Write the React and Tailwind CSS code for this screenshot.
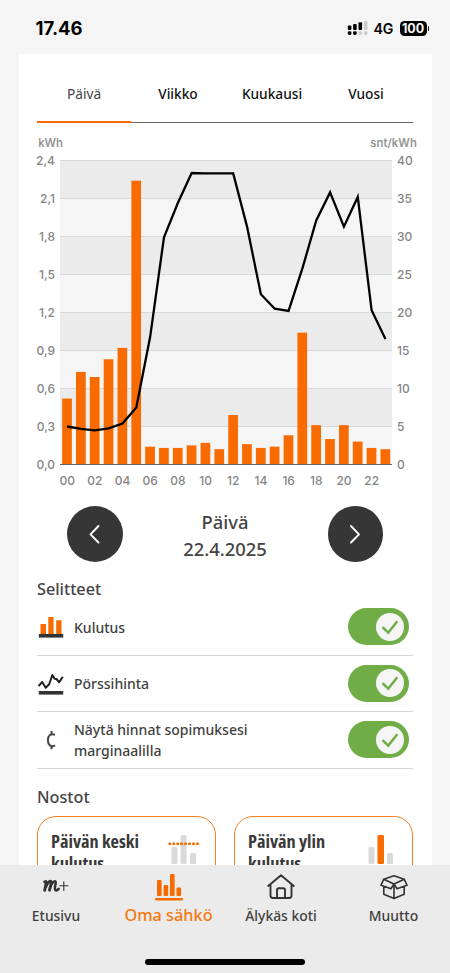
import React from "react";

const USAGE = [
  0.52, 0.73, 0.69, 0.83, 0.92, 2.24, 0.14, 0.13, 0.13, 0.15, 0.17, 0.12,
  0.39, 0.16, 0.13, 0.14, 0.23, 1.04, 0.31, 0.2, 0.31, 0.18, 0.13, 0.12,
];
const PRICE = [
  5, 4.7, 4.5, 4.75, 5.4, 7.5, 16.8, 29.9, 34.4, 38.35, 38.3, 38.3,
  38.3, 31.3, 22.4, 20.5, 20.2, 25.8, 32.1, 35.8, 31.3, 35.2, 20.3, 16.5,
];
const LEFT = ["2,4", "2,1", "1,8", "1,5", "1,2", "0,9", "0,6", "0,3", "0,0"];
const RIGHT = ["40", "35", "30", "25", "20", "15", "10", "5", "0"];

const TOP = 32;
const BOTTOM = 336;
const X0 = 41;
const STEP = 13.84;

function Chart() {
  const points = PRICE.map((p, i) => `${X0 + (i + 0.5) * STEP},${BOTTOM - p * 7.6}`).join(" ");
  return (
    <svg width="413" height="366" viewBox="0 0 413 366" className="block font-['Inter',sans-serif] text-[12px] font-medium" fill="#858585">
      <text x="19.3" y="18.5" textLength="24.5" className="text-[11.3px] font-semibold" fill="#949494">kWh</text>
      <text x="351.3" y="18.5" textLength="46.5" className="text-[11.3px] font-semibold" fill="#949494">snt/kWh</text>
      {LEFT.slice(1).map((_, i) => (
        <rect key={i} x={X0} y={TOP + i * 38} width="332" height="38" fill={i % 2 ? "#f5f5f5" : "#ebebeb"} />
      ))}
      {LEFT.slice(1).map((_, i) => (
        <rect key={i} x={X0} y={TOP + i * 38} width="332" height="1" fill="#d9d9d9" />
      ))}
      {USAGE.map((v, i) => {
        const h = (v / 2.4) * 304;
        return <rect key={i} x={X0 + (i + 0.5) * STEP - 4.75} y={BOTTOM + 0.4 - h} width="9.7" height={h} fill="#f76b00" />;
      })}
      <rect x={X0} y={BOTTOM} width="332" height="1" fill="#666" />
      <polyline points={points} transform="translate(0.2 0.5)" fill="none" stroke="#000" strokeWidth="2.3" strokeLinejoin="miter" />
      {LEFT.map((t, i) => (
        <text key={t} x="36" y={TOP + i * 38 + 4.7} textAnchor="end">{t}</text>
      ))}
      {RIGHT.map((t, i) => (
        <text key={t} x="378" y={TOP + i * 38 + 4.7}>{t}</text>
      ))}
      {USAGE.map((_, i) =>
        i % 2 ? null : (
          <text key={i} x={X0 + (i + 0.5) * STEP + 0.3} y="357" textAnchor="middle">
            {String(i).padStart(2, "0")}
          </text>
        )
      )}
    </svg>
  );
}

function Toggle() {
  return (
    <div className="mr-1 flex h-[37px] w-[61px] shrink-0 items-center justify-end rounded-full bg-[#70ad47] pr-[5px]">
      <div className="flex size-7 items-center justify-center rounded-full bg-[#f5f5f5]">
        <svg width="20" height="20" viewBox="0 0 20 20" fill="none" stroke="#70ad47" strokeWidth="2.5">
          <path d="M2.5 10.2 8.2 15.7 17.3 4.2" />
        </svg>
      </div>
    </div>
  );
}

function LegendRow({ icon, children }) {
  return (
    <div className="flex h-[56.5px] items-center border-b border-[#d5d5d5]">
      <div className="flex w-[37px] shrink-0 pt-0.5">{icon}</div>
      <div className="flex-1 pt-[3px] text-[14px] leading-[20.8px] font-medium whitespace-nowrap text-[#3f3f3f]">{children}</div>
      <Toggle />
    </div>
  );
}

function RoundButton({ d }) {
  return (
    <button className="flex size-[55.5px] items-center justify-center rounded-full bg-[#363636]">
      <svg width="20" height="24" viewBox="0 0 20 24" fill="none" stroke="#fff" strokeWidth="1.9" strokeLinecap="round" strokeLinejoin="round">
        <path d={d} />
      </svg>
    </button>
  );
}

function Highlight({ first, children }) {
  return (
    <div className="flex h-[150px] w-[179px] items-start justify-between rounded-[19px] border-[1.5px] border-[#f58025] pt-[13px] pr-[14px] pl-[13px]">
      <div className="font-['Open_Sans','Noto_Sans',sans-serif] text-[18.3px] leading-[22px] font-bold whitespace-nowrap text-[#3a3a3a] [font-stretch:75%]">
        {first}
        <br />
        kulutus
      </div>
      <svg width="34" height="32" viewBox="0 0 34 32" className="mt-[3px] shrink-0">
        {children}
      </svg>
    </div>
  );
}

function NavItem({ icon, label, width, active }) {
  return (
    <div className={"flex flex-col items-center " + width}>
      <div className="flex h-[38px] items-start">{icon}</div>
      <div className={active ? "-mt-px text-[16.3px] leading-6 font-medium whitespace-nowrap text-[#f5780f]" : "text-[13.9px] leading-6 font-medium whitespace-nowrap text-[#3f3f3f]"}>{label}</div>
    </div>
  );
}

export default function App() {
  return (
    <div className="flex h-[973px] w-[450px] flex-col overflow-hidden bg-[#f5f5f5] font-['Noto_Sans',sans-serif] text-[#3a3a3a]">
      <header className="flex h-[54px] shrink-0 items-center justify-between pt-[3px] pr-[21px] pl-[35.5px] font-['Inter',sans-serif] text-black">
        <span className="text-[18.5px] font-bold">17.46</span>
        <div className="flex items-center">
          <svg width="21" height="16" viewBox="0 0 21 16">
            <rect x="0.8" y="5.5" width="3.6" height="4.5" rx="1" />
            <rect x="6.1" y="4" width="3.6" height="6" rx="1" />
            <rect x="11.5" y="2.2" width="3.6" height="7.8" rx="1" />
            <rect x="16.9" y="1" width="3.6" height="9" rx="1" fill="#ccc" />
            <rect x="0.8" y="11.2" width="3.6" height="3.8" rx="1.4" />
            <rect x="6.1" y="11.2" width="3.6" height="3.8" rx="1.4" />
            <rect x="11.5" y="11.2" width="3.6" height="3.8" rx="1.4" fill="#ccc" />
            <rect x="16.9" y="11.2" width="3.6" height="3.8" rx="1.4" fill="#ccc" />
          </svg>
          <span className="ml-[5px] text-[14.2px] font-semibold">4G</span>
          <span className="ml-[6px] flex h-[15px] w-[27px] items-center justify-center rounded-[4.5px] bg-black pt-px text-[12.5px] font-bold text-[#f5f5f5]">100</span>
          <span className="ml-px h-[5px] w-[1.5px] rounded-r-full bg-black" />
        </div>
      </header>

      <main className="mx-[18.5px] h-[811px] shrink-0 overflow-hidden bg-white px-[0.5px]">
        <div className="mx-[18px] flex h-[69px] text-[13.7px] font-medium text-[#111]">
          <div className="flex w-[94px] items-center justify-center border-b-[2px] border-[#f76b00] pt-[13px] font-normal text-[#444]">Päivä</div>
          <div className="flex w-[94px] items-center justify-center border-b border-[#666] pt-[12px]">Viikko</div>
          <div className="flex w-[94px] items-center justify-center border-b border-[#666] pt-[12px]">Kuukausi</div>
          <div className="flex w-[94px] items-center justify-center border-b border-[#666] pt-[12px]">Vuosi</div>
        </div>
        <div className="mt-[5px]">
          <Chart />
        </div>

        <div className="mt-3 flex h-14 items-center justify-between pr-[48px] pl-[48px]">
          <RoundButton d="M13.5 4 5.5 12.3 13.5 20.5" />
          <div className="pt-[2px] text-center text-[18.4px] leading-[27.5px] font-medium text-[#444]">
            Päivä
            <br />
            22.4.2025
          </div>
          <RoundButton d="M6 4 14 12.3 6 20.5" />
        </div>

        <section className="mx-[18px] mt-[14px]">
          <h2 className="h-[23px] pt-px text-[16.2px] leading-6 font-medium text-[#444]">Selitteet</h2>
          <LegendRow
            icon={
              <svg width="27" height="23" viewBox="0 0 27 23">
                <path fill="#f76b00" d="M3.5 8H9v10H3.5zM11.3 1h5.3v17h-5.3zM19.2 4.3h5.3V18h-5.3z" />
                <rect x="1.8" y="18" width="24.4" height="3.6" fill="#333" />
              </svg>
            }
          >
            Kulutus
          </LegendRow>
          <LegendRow
            icon={
              <svg width="27" height="23" viewBox="0 0 27 23">
                <path fill="none" stroke="#222" strokeWidth="2" strokeLinejoin="round" d="M1.5 13.2 5.2 9 8.7 14.7 12.2 11.2 15.3 2 17.6 5.8 19.5 6 22.2 9.3 25.8 3.7" />
                <rect x="1.8" y="18" width="24.4" height="3.6" fill="#333" />
              </svg>
            }
          >
            Pörssihinta
          </LegendRow>
          <LegendRow
            icon={
              <svg width="27" height="23" viewBox="0 0 27 23" fill="none" stroke="#444" strokeWidth="2">
                <path d="M18 5.8C14 3.9 10.9 6.4 10.9 11.2s3 7.3 7.2 5.2M14.5 2v3.4M14.5 16.8v3.4" />
              </svg>
            }
          >
            Näytä hinnat sopimuksesi
            <br />
            marginaalilla
          </LegendRow>
        </section>

        <section className="mx-[18px] mt-[16px]">
          <h2 className="h-[31.5px] text-[16.2px] leading-6 font-medium text-[#444]">Nostot</h2>
          <div className="flex justify-between">
            <Highlight first="Päivän keski">
              <g fill="#d9d9d9">
                <rect x="4.5" y="14" width="6" height="17" rx="1.5" />
                <rect x="13.5" y="2" width="6" height="29" rx="1.5" />
                <rect x="23" y="20" width="6" height="11" rx="1.5" />
              </g>
              <path d="M2.8 10.8H31" stroke="#f76b00" strokeWidth="3" strokeLinecap="round" strokeDasharray="0 3.95" />
            </Highlight>
            <Highlight first="Päivän ylin">
              <g fill="#d9d9d9">
                <rect x="4.5" y="14" width="6" height="17" rx="1.5" />
                <rect x="23" y="20" width="6" height="11" rx="1.5" />
              </g>
              <rect x="13.5" y="2" width="6.5" height="29" rx="1.2" fill="#f76b00" />
            </Highlight>
          </div>
        </section>
      </main>

      <nav className="flex h-[108px] flex-col items-center bg-[#ebebeb]">
        <div className="flex w-full pt-[1px]">
          <NavItem
            width="w-[112px]"
            label="Etusivu"
            icon={
              <svg width="28" height="32" viewBox="0 0 28 32" fill="none" stroke="#333" strokeLinecap="round" strokeLinejoin="round">
                <path strokeWidth="2.9" d="M2.7 15.8Q4.8 14.7 4 18L2.7 24.3M3.5 21.5Q6.3 15.3 8.3 15.3 9.8 15.4 8.8 19L7.5 24.2" />
                <path strokeWidth="2.5" d="M8.2 21Q11 15.2 13 15.3 14.3 15.6 13.3 19.3 12.2 24.5 14 24.4 15.3 24.3 16.7 22.8" />
                <path strokeWidth="1.1" d="M17.8 19.8H26M21.8 15.8V24.5" />
              </svg>
            }
          />
          <NavItem
            width="w-[113px]"
            active
            label="Oma sähkö"
            icon={
              <svg width="28" height="36" viewBox="0 0 28 36" fill="#f76b00">
                <rect x="2" y="14" width="4.6" height="16" rx="1" />
                <rect x="8.6" y="19" width="4.6" height="11" rx="1" />
                <rect x="15" y="8" width="4.6" height="22" rx="1" />
                <rect x="21.5" y="21.5" width="4.6" height="8.5" rx="1" />
                <rect x="0" y="32" width="28" height="2.6" rx="1.3" />
              </svg>
            }
          />
          <NavItem
            width="w-[112px]"
            label="Älykäs koti"
            icon={
              <svg width="28" height="36" viewBox="0 0 28 36" fill="none" stroke="#333" strokeWidth="1.9" strokeLinecap="round" strokeLinejoin="round">
                <path d="M1.2 20 14 9.2 26.8 20M3.5 18.5V29.6Q3.5 32 5.8 32H22.2Q24.5 32 24.5 29.6V18.5M10 32V24Q10 22.2 11.8 22.2H16.2Q18 22.2 18 24V32" />
              </svg>
            }
          />
          <NavItem
            width="w-[113px]"
            label="Muutto"
            icon={
              <svg width="28" height="36" viewBox="0 0 28 36" fill="none" stroke="#333" strokeWidth="1.6" strokeLinecap="round" strokeLinejoin="round">
                <path d="M3.8 13.2 14 9.8 24.2 13.2 14 18zM3.8 13.2 1 19.2 11 22.7 14 18 17 22.7 27 19.2 24.2 13.2M3.8 20.5V28.2L14 32.4 24.2 28.2V20.5M14 18V32" />
              </svg>
            }
          />
        </div>
        <div className="mt-[31px] h-[5.5px] w-[160px] rounded-full bg-black" />
      </nav>
    </div>
  );
}
